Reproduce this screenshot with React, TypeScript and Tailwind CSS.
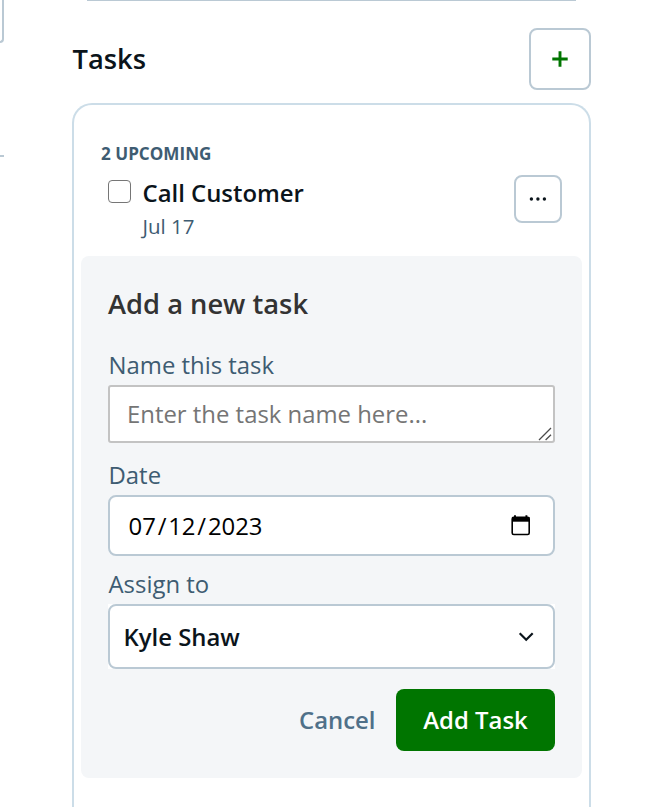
import { useState } from 'react'

const CalendarIcon = () => (
  <svg width="20" height="22" viewBox="0 0 20 22" fill="none" aria-hidden="true">
    <path d="M4 0.2v3M15.4 0.2v3" stroke="#000" strokeWidth="1.9" />
    <rect x="1.2" y="2.3" width="17" height="17.2" rx="1.6" stroke="#000" strokeWidth="1.6" />
    <path d="M1 2.3h17.6v4.4H1z" fill="#000" />
  </svg>
)

const ResizeGrip = () => (
  <svg width="14" height="14" viewBox="0 0 14 14" fill="none" aria-hidden="true">
    <path d="M1 13L13 1M7.6 13L13 7.8" stroke="#4b4b4b" strokeWidth="1.3" />
  </svg>
)

const ChevronDown = () => (
  <svg width="16" height="10" viewBox="0 0 16 10" fill="none" aria-hidden="true">
    <path d="M1.7 1.3L8.2 7.8L14.7 1.3" stroke="#0b141b" strokeWidth="2.2" />
  </svg>
)

const TaskRow = ({ name, due }: { name: string; due: string }) => {
  const [done, setDone] = useState(false)

  return (
    <div className="mt-[9px] flex items-start pl-[7px]">
      <input
        type="checkbox"
        aria-label={name}
        checked={done}
        onChange={() => setDone(!done)}
        className="mt-[5px] size-[22.5px] shrink-0 appearance-none rounded-[4px] border-[1.5px] border-[#767676] bg-white checked:bg-[#007500]"
      />
      <div className="ml-3">
        <p className="text-[23.9px] leading-9 font-semibold text-[#0b141b]">{name}</p>
        <p className="text-[20.5px] leading-[30px] text-[#3e5c72]">{due}</p>
      </div>
      <button
        type="button"
        aria-label="Task options"
        className="ml-auto flex size-12 items-center justify-center rounded-lg border-2 border-[#bac9d4] bg-white"
      >
        <svg width="18" height="4" viewBox="0 0 18 4" fill="#0b141b" aria-hidden="true">
          <circle cx="2.4" cy="2" r="1.7" />
          <circle cx="8.9" cy="2" r="1.7" />
          <circle cx="15.4" cy="2" r="1.7" />
        </svg>
      </button>
    </div>
  )
}

const NewTaskForm = () => {
  return (
    <div className="mx-[7px] mt-[15px] h-[522px] rounded-lg bg-[#f4f6f8] px-[27px] pt-7">
      <h3 className="text-[27.3px] leading-10 font-semibold text-[#333333]">Add a new task</h3>

      <div className="mt-[25px] pl-[0.5px] text-[23.9px] leading-8 text-[#3e5c72]">Name this task</div>
      <div className="mt-[4px] flex h-[58px] items-center rounded-[3px] border-2 border-[#c3c3c3] bg-white pl-[17px]">
        <span className="text-[23.9px] leading-8 text-[#757575]">Enter the task name here...</span>
        <span className="mr-px ml-auto self-end">
          <ResizeGrip />
        </span>
      </div>

      <div className="mt-4 pl-[0.5px] text-[23.9px] leading-8 text-[#3e5c72]">Date</div>
      <div className="mt-[4px] flex h-[61px] items-center justify-between rounded-lg border-2 border-[#bac9d4] bg-white pr-[22px] pl-[18.5px]">
        <span className="text-[23.9px] leading-8 text-black">
          07<span className="px-[1.8px]">/</span>12<span className="px-[1.8px]">/</span>2023
        </span>
        <CalendarIcon />
      </div>

      <div className="mt-3 pl-[0.5px] text-[23.9px] leading-8 text-[#3e5c72]">Assign to</div>
      <div className="mt-[4px] bg-white">
        <div className="flex h-[65px] items-center justify-between rounded-lg border-2 border-[#bac9d4] pr-[19px] pl-[13.5px]">
          <span className="text-[23.9px] leading-8 font-semibold text-[#0b141b]">Kyle Shaw</span>
          <ChevronDown />
        </div>
      </div>

      <div className="mt-5 flex items-center justify-end gap-[20.5px] text-[23.9px] font-semibold">
        <button type="button" className="text-[#4f7089]">
          Cancel
        </button>
        <button type="button" className="h-[62px] w-[159px] rounded-lg bg-[#007500] text-white">
          Add Task
        </button>
      </div>
    </div>
  )
}

const App = () => {
  return (
    <div className="flex h-[807px] w-[670px] overflow-hidden bg-white font-['Open_Sans',sans-serif]">
      {/* edge of the neighbouring column */}
      <div className="w-1 shrink-0">
        <div className="h-[43px] rounded-br-lg border-r-2 border-b-2 border-[#bac9d4]" />
        <div className="mt-28 h-[1.5px] bg-[#bac9d4]" />
      </div>

      <main className="ml-[68px] flex w-[519px] flex-col">
        {/* bottom of the card above */}
        <div className="mx-[15px] h-px shrink-0 bg-[#bac9d4]" />
        <div className="mt-[27px] flex h-[62px] shrink-0 items-center justify-between">
          <h2 className="pl-[0.5px] text-[27.3px] leading-10 font-semibold text-[#0b141b]">Tasks</h2>
          <button
            type="button"
            aria-label="Add task"
            className="flex size-[62px] items-center justify-center rounded-lg border-2 border-[#bac9d4] bg-white"
          >
            <svg width="16" height="16" viewBox="0 0 16 16" fill="none" aria-hidden="true">
              <path d="M8 0.3v15.4M0.3 8h15.4" stroke="#007500" strokeWidth="2.9" />
            </svg>
          </button>
        </div>

        <section className="mt-[13px] h-[740px] shrink-0 rounded-t-[20px] border-2 border-b-0 border-[#ccdde8]">
          <div className="px-[27px] pt-[37px]">
            <p className="text-[17.1px] leading-6 font-bold text-[#3e5c72]">2 UPCOMING</p>
            <TaskRow name="Call Customer" due="Jul 17" />
          </div>
          <NewTaskForm />
        </section>
      </main>
    </div>
  )
}

export default App
